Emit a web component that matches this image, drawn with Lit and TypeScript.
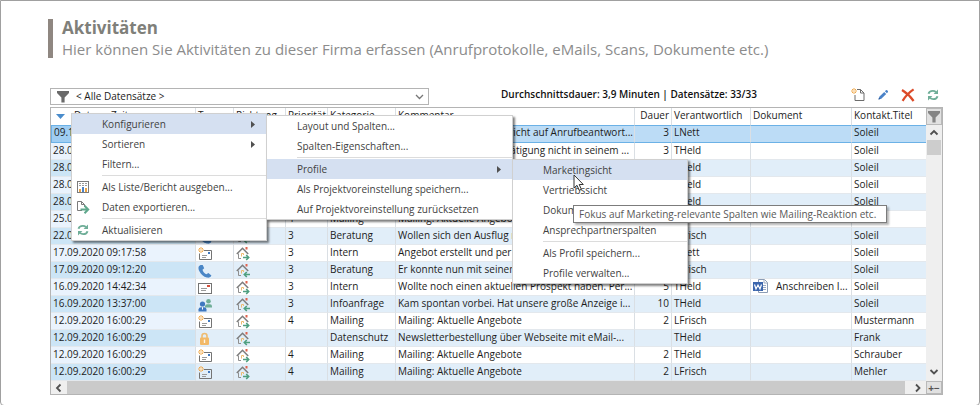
import { LitElement, html, css, svg, nothing, TemplateResult } from "lit";
import { customElement, property } from "lit/decorators.js";
import { classMap } from "lit/directives/class-map.js";

type Glyph = TemplateResult | ReturnType<typeof svg>;

const icon = (body: unknown, w = 14, h = 14) =>
  html`<svg width=${w} height=${h} viewBox="0 0 ${w} ${h}" fill="none" aria-hidden="true">${body}</svg>`;

const funnel = (color: string) =>
  icon(svg`<path d="M1 1H13V3L8.6 7.6V12.6H5.4V7.6L1 3Z" fill=${color}/>`);

const spark = svg`<path d="M3 0V6M0 3H6M1 1L5 5M5 1L1 5" stroke="#f0a94c" stroke-width="1"/><circle cx="3" cy="3" r="1" fill="#fff3df"/>`;

const refresh = icon(svg`
  <path d="M2.500 5.800C3 3.800 4.800 2.900 6.800 2.900C8.200 2.900 9.200 3.300 10 4.100" stroke="#6fae98" stroke-width="1.900"/>
  <path d="M12 1.500V6H7.600Z" fill="#6fae98"/>
  <path d="M11.500 8.200C11 10.200 9.200 11.100 7.200 11.100C5.800 11.100 4.800 10.700 4 9.900" stroke="#6fae98" stroke-width="1.900"/>
  <path d="M2 12.500V8H6.400Z" fill="#6fae98"/>`);

const newDoc = icon(svg`<path d="M6 1.5H9.500L13 5V12.500H4V7" stroke="#6d6d6d"/><path d="M9.500 1.500V5H13" stroke="#6d6d6d"/>${spark}`);
const pencil = icon(svg`
  <path d="M2.500 11.500L3.300 8.800L8.200 3.900L10.200 5.900L5.300 10.800Z" fill="#4a82c8"/>
  <path d="M8.900 3.200L9.900 2.200Q10.600 1.700 11.200 2.300L11.800 2.900Q12.400 3.500 11.800 4.200L10.900 5.200Z" fill="#4a82c8"/>
  <path d="M2.500 11.500L3 9.800L4.200 11Z" fill="#24508c"/>`);
const cross = icon(svg`<path d="M1 2C5 4.400 9.400 8.400 12.600 13M12.600 1.400C8.600 4 4.400 8.400 1.600 12.800" stroke="#dc4a28" stroke-width="2.200"/>`);

const report = icon(svg`
  <rect x="1.500" y="1.500" width="11" height="11" stroke="#7b7b7b"/>
  <path d="M3 3.500H11M3 5.500H11" stroke="#9b9b9b" stroke-dasharray="2 1"/>
  <path d="M4 9V12" stroke="#e9a345" stroke-width="2"/><path d="M7 7V12" stroke="#4a82c8" stroke-width="2"/><path d="M10 8V12" stroke="#e9a345" stroke-width="2"/>`);
const exportIcon = icon(svg`
  <path d="M6 10.500H1.500V1.500H5.500L8.500 4.500V7" stroke="#7b7b7b"/><path d="M5.500 1.500V4.500H8.500" stroke="#7b7b7b"/>
  <path d="M4.500 9.500H11M8.500 5.800L12.200 9.500L8.500 13.200" stroke="#5fa88c" stroke-width="2"/>`);

const mailNew = icon(svg`<path d="M6 3.500H13.500V12.500H1.500V6.500" stroke="#747474"/><rect x="10" y="5" width="2" height="2" fill="#3f78c0"/><path d="M4 8.500H9M4 10.500H8" stroke="#9a9a9a"/>${spark}`, 15, 14);
const mail = icon(svg`<rect x=".5" y="2.500" width="13" height="10" stroke="#747474"/><rect x="9" y="4" width="3" height="2" fill="#d6503c"/><path d="M3 7.500H9M3 9.500H8" stroke="#9a9a9a"/>`, 15, 14);
const phone = icon(svg`<path d="M2.600 1C.2 1.800 0 4.400 1.400 7.200C3 10.400 5.600 12.800 8.800 13.500C11 14 12.700 13.300 13.400 11.600L10.400 8.900L8.300 10.300C6.500 9.400 5 7.600 4.500 5.700L6.200 4.300L4.700 1Z" fill="#4a86c6"/>`, 15, 14);
const people = icon(svg`
  <circle cx="10.500" cy="3.300" r="2.300" fill="#6fae98"/><path d="M7 9.500V8Q7.500 6.200 9 6.200H12Q14 6.200 14 8.200V9.500Z" fill="#6fae98"/>
  <circle cx="4.500" cy="6" r="2.600" fill="#3f78c0"/><path d="M.5 13.500V11.500Q.8 9.200 3 9.200H6Q8.500 9.200 8.500 11.500V13.500Z" fill="#3f78c0"/><path d="M4.500 9.200V11.500" stroke="#fff"/>`, 15, 14);
const lock = icon(svg`<path d="M4 6V4Q4 1.500 6.500 1.500T9 4V6" stroke="#eebc72" stroke-width="1.600"/><rect x="2" y="5.500" width="9" height="7.500" rx="1" fill="#f2b968"/><path d="M6.500 7.500V11" stroke="#fff6e6" stroke-width="1.400"/>`, 15, 14);

const house = (arrow: unknown) => icon(svg`
  <path d="M.8 8L6.500 2.300L12.200 8" stroke="#7d7d7d" stroke-width="1.500"/>
  <path d="M2.500 7.500V12.500H5" stroke="#8f8f8f"/>
  <rect x="9.500" y="1" width="2" height="2.500" fill="#e0634f"/>
  <path d="M5.500 10.500V7.500H7.500V9" stroke="#eebc72"/>${arrow}`, 15, 15);
const out = house(svg`<path d="M7 11.500H12M10.200 9L12.700 11.500L10.200 14" stroke="#4f9f80" stroke-width="1.600"/>`);
const inn = house(svg`<path d="M9 11.500H14M10.800 9L8.300 11.500L10.800 14" stroke="#4f9f80" stroke-width="1.600"/>`);

const word = icon(svg`
  <path d="M5.500 .5H11.500L14.500 3.500V13.500H5.500Z" fill="#fff" stroke="#8d9db5"/><path d="M11 1V4H14M10 6.500H13M10 8.500H13M10 10.500H13" stroke="#9cabc4"/>
  <rect x="0" y="3" width="10" height="9" fill="#3c66ad"/><path d="M1.500 5.500L3 10L5 6L7 10L8.500 5.500" stroke="#fff" stroke-width="1.200"/>`, 15, 14);

const chevron = (d: string, w = 10, h = 10) => icon(svg`<path d=${d} stroke="#505050" stroke-width="1.800"/>`, w, h);

interface Activity {
  date: string;
  type: Glyph;
  dir: Glyph;
  prio: string;
  category: string;
  comment: string;
  minutes: string;
  owner: string;
  file?: string;
  contact: string;
}

const row = (date: string, type: Glyph, dir: Glyph, prio: string, category: string, comment: string,
  minutes: string, owner: string, contact: string, file?: string): Activity =>
  ({ date, type, dir, prio, category, comment, minutes, owner, contact, file });

const activities: Activity[] = [
  row("09.10.2020 10:12:41", phone, out, "3", "Beratung", "Nicht angetroffen. Nachricht auf Anrufbeantwort...", "3", "LNett", "Soleil"),
  row("28.09.2020 15:20:10", phone, out, "3", "Beratung", "Konnte die Auftragsbestätigung nicht in seinem ...", "3", "THeld", "Soleil"),
  row("28.09.2020 14:05:37", mail, out, "3", "Intern", "Unterlagen verschickt", "4", "THeld", "Soleil"),
  row("28.09.2020 11:48:02", phone, inn, "3", "Beratung", "Rückfrage zum Angebot", "2", "THeld", "Soleil"),
  row("28.09.2020 09:30:55", mail, out, "3", "Intern", "Termin vereinbart", "3", "THeld", "Soleil"),
  row("25.09.2020 16:00:29", mailNew, out, "4", "Mailing", "Mailing: Aktuelle Angebote", "2", "THeld", "Soleil"),
  row("22.09.2020 10:41:16", phone, inn, "3", "Beratung", "Wollen sich den Ausflug noch überlegen", "4", "LFrisch", "Soleil"),
  row("17.09.2020 09:17:58", mailNew, out, "3", "Intern", "Angebot erstellt und per eMail verschickt", "5", "LNett", "Soleil"),
  row("17.09.2020 09:12:20", phone, inn, "3", "Beratung", "Er konnte nun mit seinem Team sprechen", "4", "LFrisch", "Soleil"),
  row("16.09.2020 14:42:34", mail, out, "3", "Intern", "Wollte noch einen aktuellen Prospekt haben. Per...", "5", "THeld", "Soleil", "Anschreiben I..."),
  row("16.09.2020 13:37:00", people, inn, "3", "Infoanfrage", "Kam spontan vorbei. Hat unsere große Anzeige i...", "10", "THeld", "Soleil"),
  row("12.09.2020 16:00:29", mailNew, out, "4", "Mailing", "Mailing: Aktuelle Angebote", "2", "LFrisch", "Mustermann"),
  row("12.09.2020 16:00:29", lock, inn, "", "Datenschutz", "Newsletterbestellung über Webseite mit eMail-...", "", "THeld", "Frank"),
  row("12.09.2020 16:00:29", mailNew, out, "4", "Mailing", "Mailing: Aktuelle Angebote", "2", "THeld", "Schrauber"),
  row("12.09.2020 16:00:29", mailNew, out, "4", "Mailing", "Mailing: Aktuelle Angebote", "2", "LFrisch", "Mehler"),
];

interface Entry {
  label?: string;
  icon?: Glyph;
  arrow?: boolean;
  active?: boolean;
  tip?: string;
  children?: Entry[];
}

const menu: Entry[] = [
  {
    label: "Konfigurieren", arrow: true, active: true, children: [
      { label: "Layout und Spalten..." },
      { label: "Spalten-Eigenschaften..." },
      {},
      {
        label: "Profile", arrow: true, active: true, children: [
          { label: "Marketingsicht", active: true, tip: "Fokus auf Marketing-relevante Spalten wie Mailing-Reaktion etc." },
          { label: "Vertriebssicht" },
          { label: "Dokumentensicht" },
          { label: "Ansprechpartnerspalten" },
          {},
          { label: "Als Profil speichern..." },
          { label: "Profile verwalten..." },
        ],
      },
      { label: "Als Projektvoreinstellung speichern..." },
      { label: "Auf Projektvoreinstellung zurücksetzen" },
    ],
  },
  { label: "Sortieren", arrow: true },
  { label: "Filtern..." },
  {},
  { label: "Als Liste/Bericht ausgeben...", icon: report },
  { label: "Daten exportieren...", icon: exportIcon },
  {},
  { label: "Aktualisieren", icon: refresh },
];

@customElement("context-menu")
class ContextMenu extends LitElement {
  @property({ attribute: false }) entries: Entry[] = [];

  static styles = css`
    :host {
      display: block;
      box-sizing: border-box;
      background: #fff;
      border: 1px solid #d0d0d0;
      box-shadow: 2px 2px 2px rgba(0, 0, 0, 0.5);
      font: 10px/20px "Open Sans", "Noto Sans", sans-serif;
    }
    ul { list-style: none; margin: 0; padding: 0; }
    li { position: relative; }
    .sep { height: 1px; margin: 1px 0 1px 30px; background: #dcdcdc; }
    button {
      display: grid;
      grid-template-columns: 22px 1fr 8px;
      column-gap: 8px;
      align-items: center;
      width: 100%;
      height: 20px;
      padding: 0 8px 0 0;
      border: 0;
      background: none;
      color: #424242;
      font: inherit;
      text-align: left;
      white-space: nowrap;
    }
    .active { background: #d5e0f1; }
    .glyph { display: flex; justify-content: flex-end; padding-right: 4px; }
    svg { display: block; }
    .sub { position: absolute; left: 100%; top: 1px; z-index: 1; width: 247px; }
    .deep { top: 0; width: 176px; }
    .pointer { position: absolute; left: 60px; top: 14px; z-index: 3; }
    .tip {
      position: absolute;
      left: 60px;
      top: 45px;
      z-index: 2;
      padding: 0 10px 0 5px;
      border: 1px solid #7c7c7c;
      background: #fff;
      box-shadow: 2px 2px 2px rgba(0, 0, 0, 0.3);
      color: #585858;
      line-height: 16px;
      white-space: nowrap;
    }
  `;

  render() {
    return html`<ul role="menu">${this.entries.map((e) => e.label === undefined
      ? html`<li class="sep" role="separator"></li>`
      : html`<li role="none">
          <button class=${classMap({ active: !!e.active })} role="menuitem">
            <span class="glyph">${e.icon ?? nothing}</span>
            <span>${e.label}</span>
            ${e.arrow ? icon(svg`<path d="M1 1L5 4.500L1 8Z" fill="#505050"/>`, 8, 9) : nothing}
          </button>
          ${e.children ? html`<context-menu class=${classMap({ sub: true, deep: e.children.length > 6 })} .entries=${e.children}></context-menu>` : nothing}
          ${e.tip ? html`
            <span class="tip" role="tooltip">${e.tip}</span>
            <span class="pointer">${icon(svg`<path d="M1 1V14L4 11.300L6.200 16.300L8.400 15.300L6.200 10.500H10.300Z" fill="#fff" stroke="#333"/>`, 12, 18)}</span>` : nothing}
        </li>`)}</ul>`;
  }
}

@customElement("app-root")
class AppRoot extends LitElement {
  static styles = css`
    :host {
      display: block;
      background: #fff;
      color: #1c1c1c;
      font: 10px/16px "Open Sans", "Noto Sans", sans-serif;
    }
    .page {
      box-sizing: border-box;
      min-height: 100vh;
      padding: 18px 36px 10px 49px;
      border: 1px solid #a0a0a0;
      border-radius: 0 0 4px 4px;
    }
    svg { display: block; flex: none; }
    header { margin: 0 0 30px -2px; padding-left: 9px; border-left: 5px solid #8f8781; color: #8c8c8c; }
    h1 { margin: 0 0 4px; color: #7f7f7a; font-size: 17px; line-height: 18px; font-weight: 700; }
    header p { margin: 0; font-size: 15px; line-height: 17px; }
    .bar { display: flex; align-items: center; height: 17px; margin-bottom: 2px; padding-right: 3px; }
    .combo {
      display: flex;
      align-items: center;
      flex: 0 1 379px;
      box-sizing: border-box;
      height: 17px;
      margin-right: 72px;
      padding: 0 4px 0 5px;
      border: 1px solid #b4b4b4;
    }
    select {
      flex: 1;
      min-width: 0;
      height: 15px;
      padding: 0 0 0 6px;
      border: 0;
      appearance: none;
      background: none;
      color: inherit;
      font: 500 10px/15px "Open Sans", "Noto Sans", sans-serif;
    }
    .sum { font-weight: 600; color: #111; line-height: 13px; padding-bottom: 4px; white-space: nowrap; }
    .tools { display: flex; gap: 11px; margin-left: auto; padding-bottom: 4px; }
    .tools button { padding: 0; border: 0; background: none; }
    .grid {
      position: relative;
      display: grid;
      grid-template-columns: minmax(0, 1fr) 16px;
      grid-template-rows: auto 13px;
      border: 1px solid #b4b4b4;
    }
    table { width: 100%; table-layout: fixed; border-collapse: separate; border-spacing: 0; }
    .c-date { width: 145px; } .c-type { width: 38px; } .c-dir { width: 52px; }
    .c-prio { width: 42px; } .c-cat { width: 68px; } .c-min { width: 37px; }
    .c-own { width: 79px; } .c-doc { width: 101px; } .c-con { width: 74px; }
    th, td {
      box-sizing: border-box;
      height: 17px;
      padding: 0 2px;
      border-right: 1px solid #dadfe4;
      overflow: hidden;
      font-weight: 500;
      line-height: 15px;
      text-align: left;
      vertical-align: top;
      white-space: nowrap;
    }
    td { border-bottom: 1px solid #e3e8ed; }
    th:last-child, td:last-child { border-right: 0; }
    .num { text-align: right; }
    .date { font-weight: 400; background: #eaf3fd; }
    tr.alt td { background: #e1eef9; }
    tr.alt .date { background: #cce5f6; }
    tr.sel td { height: 18px; line-height: 13px; background: #bcdcf6; border-top: 1px solid #6bb1e6; border-bottom: 1px solid #6bb1e6; }
    tr.sel .date { background: #9fcdf2; border-left: 1px solid #6bb1e6; }
    .head { display: flex; align-items: center; gap: 9px; padding-left: 3px; }
    .pic { display: flex; height: 15px; align-items: center; padding-top: 1px; }
    .file { display: flex; gap: 8px; }
    .vbar { display: flex; flex-direction: column; align-items: center; background: #efefef; }
    .vbar button, .corner {
      box-sizing: border-box;
      width: 16px;
      height: 17px;
      padding: 0;
      border: 1px solid #b9b9b9;
      background: #e1e1e1;
      display: flex;
      align-items: center;
      justify-content: center;
      color: #555;
      font: 700 10px/10px "Open Sans", sans-serif;
    }
    .vbar .up { margin: 3px 0 2px; }
    .vthumb { width: 14px; height: 15px; background: #cdcdcd; }
    .vbar .down { margin: auto 0 4px; }
    .hbar { display: flex; align-items: center; background: #efefef; }
    .hbar svg { margin: 0 3px; }
    .hthumb { flex: 1; height: 13px; margin-right: 5px; background: #cacaca; }
    .corner { height: 13px; }
    .menu { position: absolute; left: 20px; top: 5px; width: 196px; }
  `;

  render() {
    return html`<main class="page">
      <header>
        <h1>Aktivitäten</h1>
        <p>Hier können Sie Aktivitäten zu dieser Firma erfassen (Anrufprotokolle, eMails, Scans, Dokumente etc.)</p>
      </header>
      <div class="bar">
        <label class="combo">
          ${funnel("#6a6a6a")}
          <select aria-label="Filter"><option>&lt; Alle Datensätze &gt;</option></select>
          ${icon(svg`<path d="M1 3L4.500 6.500L8 3" stroke="#777" stroke-width="1.300"/>`, 9, 9)}
        </label>
        <span class="sum">Durchschnittsdauer: 3,9 Minuten | Datensätze: 33/33</span>
        <div class="tools">
          <button aria-label="Neu">${newDoc}</button>
          <button aria-label="Bearbeiten">${pencil}</button>
          <button aria-label="Löschen">${cross}</button>
          <button aria-label="Aktualisieren">${refresh}</button>
        </div>
      </div>
      <div class="grid">
        <table>
          <colgroup>
            <col class="c-date"><col class="c-type"><col class="c-dir"><col class="c-prio"><col class="c-cat"><col>
            <col class="c-min"><col class="c-own"><col class="c-doc"><col class="c-con">
          </colgroup>
          <thead><tr>
            <th><div class="head">${icon(svg`<path d="M0 3H9L4.500 8Z" fill="#4a8ccc"/>`, 9, 9)}<span>Datum, Zeit</span></div></th>
            <th>Typ</th><th>Richtung</th><th>Priorität</th><th>Kategorie</th><th>Kommentar</th>
            <th class="num">Dauer</th><th>Verantwortlich</th><th>Dokument</th><th>Kontakt.Titel</th>
          </tr></thead>
          <tbody>${activities.map((a, i) => html`<tr class=${classMap({ sel: i === 0, alt: i > 0 && i % 2 === 0 })}>
            <td class="date">${a.date}</td>
            <td><div class="pic">${a.type}</div></td>
            <td><div class="pic">${a.dir}</div></td>
            <td>${a.prio}</td>
            <td>${a.category}</td>
            <td>${a.comment}</td>
            <td class="num">${a.minutes}</td>
            <td>${a.owner}</td>
            <td>${a.file ? html`<div class="file">${word}<span>${a.file}</span></div>` : nothing}</td>
            <td>${a.contact}</td>
          </tr>`)}</tbody>
        </table>
        <div class="vbar">
          <button aria-label="Spaltenfilter">${funnel("#858585")}</button>
          <span class="up">${chevron("M1.500 6.500L5 3L8.500 6.500")}</span>
          <span class="vthumb"></span>
          <span class="down">${chevron("M1.500 3L5 6.500L8.500 3")}</span>
        </div>
        <div class="hbar">
          ${chevron("M6.500 1.500L3 5L6.500 8.500")}
          <span class="hthumb"></span>
          ${chevron("M3 1.500L6.500 5L3 8.500")}
        </div>
        <button class="corner" aria-label="Spalten ein- und ausblenden">+−</button>
        <context-menu class="menu" .entries=${menu}></context-menu>
      </div>
    </main>`;
  }
}
